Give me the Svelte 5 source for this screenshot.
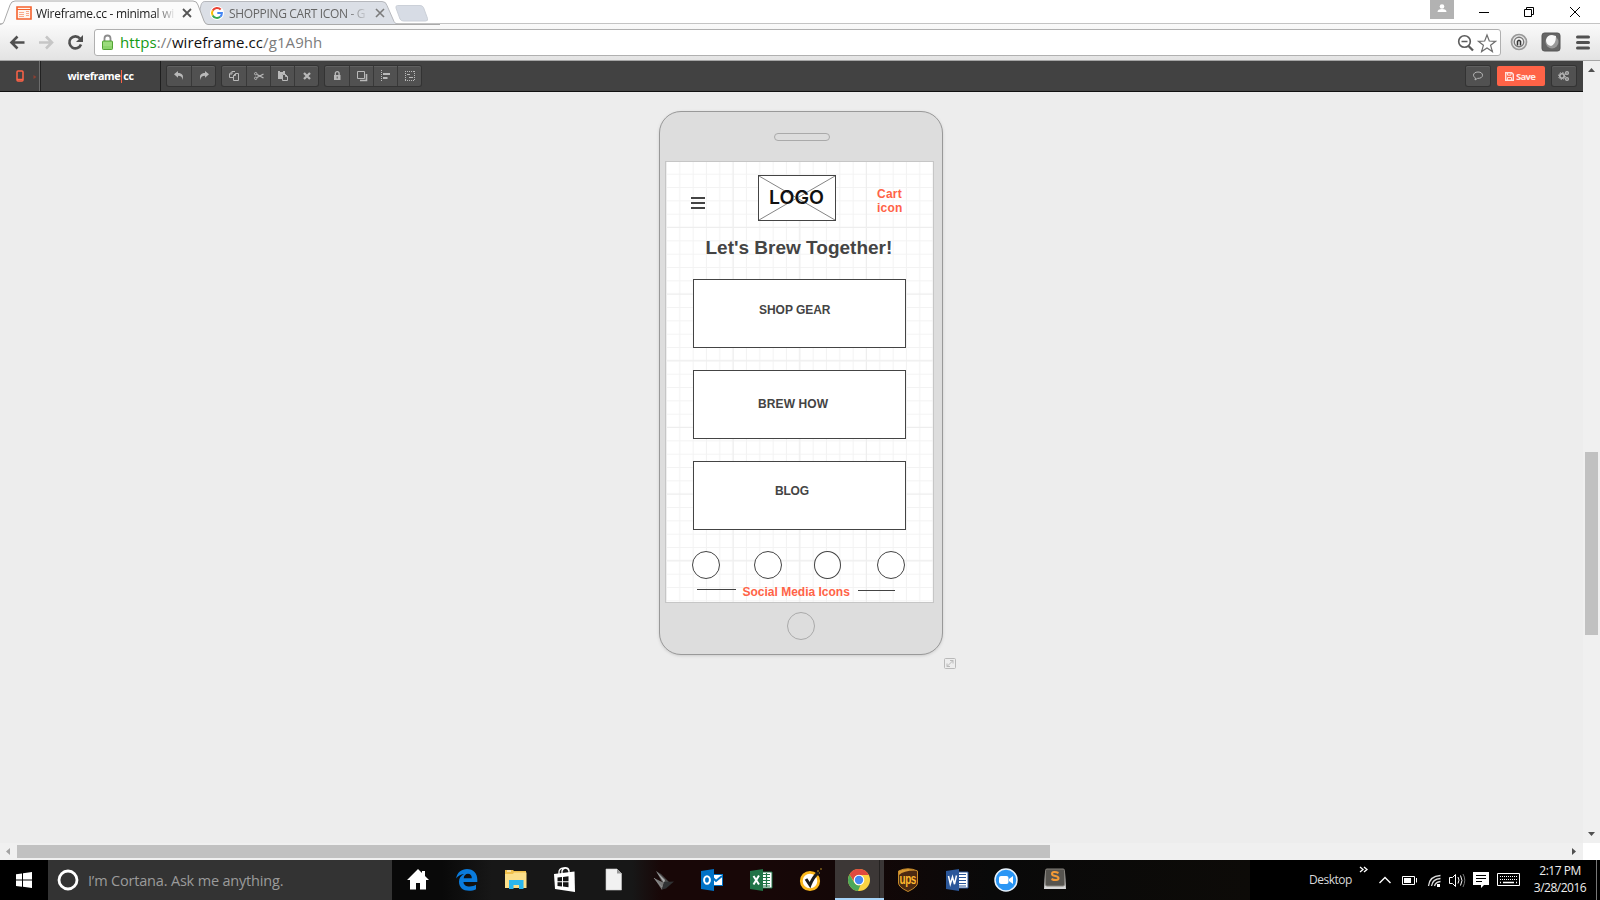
<script>
  const groups = [
    ['undo', 'redo'],
    ['copy', 'cut', 'paste', 'delete'],
    ['lock', 'layers', 'align', 'select']
  ];
  const apps = ['home', 'edge', 'files', 'store', 'page', 'snip', 'outlook', 'excel', 'norton', 'chrome', 'ups', 'word', 'zoom', 'sublime'];
  const boxes = [
    { top: 117, label: 'SHOP GEAR', x: 66, y: 23, w: 72.5 },
    { top: 208, label: 'BREW HOW', x: 65, y: 26, w: 71 },
    { top: 299, label: 'BLOG', x: 82, y: 22, w: 35 }
  ];
  const circles = [
    { x: 26, w: 28 },
    { x: 88, w: 28 },
    { x: 148, w: 27 },
    { x: 211, w: 28 }
  ];
</script>

{#snippet tool(name)}
  <svg width="12" height="12" viewBox="0 0 12 12" fill="none" stroke="#b9b9b9">
    {#if name === 'undo'}
      <path d="M1 4.3 5 1v2c4 0 6 2 4.5 7C9.300 7 8 5.800 5 5.800v2z" fill="#b9b9b9" stroke="none" />
    {:else if name === 'redo'}
      <path d="M11 4.300 7 1v2c-4 0-6 2-4.500 7C2.700 7 4 5.800 7 5.800v2z" fill="#b9b9b9" stroke="none" />
    {:else if name === 'copy'}
      <path d="M5 7.500H1.500V4L4 1.500h3M4 1.500V4H1.500M5.500 10.500v-5L7.500 3.500h3v7zM7.500 3.500v2h-2" />
    {:else if name === 'cut'}
      <circle cx="2.700" cy="3.700" r="1.200" /><circle cx="2.700" cy="8.300" r="1.200" />
      <path d="m4 4.500 6.500 3.500M4 7.500l6.500-3.500" stroke-width="1.400" />
    {:else if name === 'paste'}
      <path d="M1 1h7v3H5v5H1z" fill="#b9b9b9" stroke="none" /><path d="M5.500 4.500h3l2 2v4h-5zM8.500 4.500v2h2" /><path d="M3 1.500h3" stroke="#505050" />
    {:else if name === 'delete'}
      <path d="m3 3 6 6M9 3 3 9" stroke-width="2.300" />
    {:else if name === 'lock'}
      <path d="M3 5h6.500v5H3z" fill="#b9b9b9" stroke="none" /><path d="M4.300 5V3.500a1.900 1.900 0 0 1 3.800 0V5" stroke-width="1.300" /><path d="M6.200 6.500v2" stroke="#555" />
    {:else if name === 'layers'}
      <path d="M1.500 1.500h7v7h-7z" /><path d="M10.500 4v6.500H4" stroke-width="1.600" />
    {:else if name === 'align'}
      <path d="M1.500 0v11" stroke-dasharray="1 1" /><path d="M3 4h7M3 8h4.500" stroke-width="2" />
    {:else if name === 'select'}
      <path d="M1 1.500h10M1 10.500h10M1.500 1v10M10.500 1v10" stroke-dasharray="1 1" /><path d="M3 4.500h3M5 7.500h4" stroke-width="1.200" />
    {/if}
  </svg>
{/snippet}

{#snippet appIcon(name)}
  <svg width="28" height="28" viewBox="0 0 28 28">
    {#if name === 'home'}
      <path d="M14 3 3 14h3v9.500h6V17h4v6.500h6V14h3l-4-4V5h-3v2z" fill="#fff" />
    {:else if name === 'edge'}
      <path d="M3.200 12.500C4 6.500 8.500 3 14 3c6.500 0 10.300 4.500 10.300 10.500V16H10.500c.2 3.300 2.800 4.500 6.200 4.500 2.500 0 4.500-.6 6.300-1.700v4.500c-2 1-4.300 1.500-7 1.500-6 0-10-3.300-10-9 0-3.500 1.700-6.200 5-7.800-3.500.2-6 2-7.800 4.500m7.500-.2h8.100c0-3-1.400-4.500-3.800-4.500-2.300 0-4 1.700-4.300 4.500" fill="#0a7bdc" />
    {:else if name === 'files'}
      <path d="M3 5V4h8l1 1h12v17H3z" fill="#f0c14e" /><path d="M3 8h8l1-1.500h12.500V22H3z" fill="#fbdf8b" /><path d="M7 23V14h14.500v9H17v-4h-5.500v4z" fill="#29b6ee" /><path d="M5 5h4" stroke="#fff" />
    {:else if name === 'store'}
      <path d="m3 8 20.500-2.500L24 26 4 23z" fill="#fff" /><path d="M8 9V6c0-4.500 9-6 10-1.500V8M11 8V5c1-4 6-4 7 0" fill="none" stroke="#fff" stroke-width="1.300" /><path d="m6.500 11.500 4.500-.5v4.300H6.500zm5.500-.6 5.500-.7v5.100H12zM6.500 16.300H11v4.200l-4.500-.5zm5.500 0h5.500v5l-5.500-.7z" fill="#151515" />
    {:else if name === 'page'}
      <path d="M6 3h11l4.500 4.500V24H6z" fill="#f1f1f1" stroke="#ccc" stroke-width=".6" /><path d="M17 3v4.500h4.500z" fill="#999" />
    {:else if name === 'snip'}
      <path d="m7 5 5 3 9 9-7 1z" fill="#4a4a4a" /><path d="m7 5 9 9-1 3z" fill="#aaa" /><path d="m5 12 10 5-2 7z" fill="#777" /><path d="m15 16 10-.5-8 7-4 1z" fill="#303234" /><path d="m5 12 8 9" stroke="#999" stroke-width=".7" />
    {:else if name === 'outlook'}
      <path d="M13 8h12v12H13z" fill="#0072c6" /><path d="M14 9h10v10H14z" fill="#fff" /><path d="m14 11 4 4 6-5" fill="none" stroke="#0072c6" stroke-width="2" /><path d="m3 5 13-2v22L3 23z" fill="#0072c6" /><ellipse cx="9" cy="14" rx="2.900" ry="3.800" fill="none" stroke="#fff" stroke-width="2" />
    {:else if name === 'excel' || name === 'word'}
      <path d="M14 6h11v16H14z" fill="#fff" stroke={name === 'excel' ? '#217346' : '#2b579a'} />
      {#if name === 'excel'}<path d="M15 8.500h8M15 11.500h8M15 14.500h8M15 17.500h8M15 20h8M19.500 7v14" stroke="#217346" stroke-width="1.200" />
      {:else}<path d="M15 8.500h8M15 11.500h8M15 14.500h8M15 17.500h8M15 20h8" stroke="#2b579a" stroke-width="1.200" />{/if}
      <path d="m3 5 13-2v22L3 23z" fill={name === 'excel' ? '#217346' : '#2b579a'} />
      {#if name === 'excel'}<path d="m6.500 10 5.500 8.500M12 9.500 6.500 18.500" stroke="#fff" stroke-width="2" />
      {:else}<path d="m5.500 10 1.800 8L9.500 11l2 7.200L13.500 9.500" fill="none" stroke="#fff" stroke-width="1.500" />{/if}
    {:else if name === 'norton'}
      <circle cx="14" cy="15" r="8.700" fill="#fff" stroke="#fcb81c" stroke-width="2.800" /><path d="m10 13 4 6q3-8 9-13" fill="none" stroke="#1c1c1c" stroke-width="3" /><path d="M21 5h2m1-2h2M23 7h1" stroke="#b28a20" />
    {:else if name === 'chrome'}
      <circle cx="14" cy="14" r="11" fill="#fbd343" /><path d="M4.500 8.500A11 11 0 0 1 23.800 9H14a5 5 0 0 0-4.500 7z" fill="#e04a3f" /><path d="M4.500 8.500 9.500 17a5 5 0 0 0 6 2L13 25A11 11 0 0 1 4.500 8.500" fill="#4ba85a" /><circle cx="14" cy="14" r="5.300" fill="#fff" /><circle cx="14" cy="14" r="4.200" fill="#4688f1" />
    {:else if name === 'ups'}
      <path d="M4.500 5q9.500-4.500 19 0v12q0 4-9.500 8.500Q4.500 21 4.500 17z" fill="#4c2a12" stroke="#c78a2a" /><path d="M5 9q5-5 18-4.500V5Q14 1 5 5z" fill="#d99a31" /><g transform="translate(5.500 17.500) scale(.83 1.150)"><text x="0" y="0" font-family="Liberation Sans, sans-serif" font-weight="700" font-size="12" letter-spacing="-.5" fill="#ffb82d">ups</text></g>
    {:else if name === 'zoom'}
      <circle cx="14" cy="14" r="11" fill="#2a96f5" stroke="#e9f3fc" stroke-width="1.500" /><rect x="7" y="10" width="9.500" height="8" rx="2" fill="#fff" /><path d="m17 13 4-3v8l-4-3z" fill="#fff" />
    {:else}
      <path d="M4 6h20l1 17H3z" fill="#d7d7d7" /><rect x="4.500" y="3" width="19" height="17" rx="1.500" fill="#56544f" stroke="#85827c" /><path d="M17.500 7c-3-1.500-6.500-1.500-6.500.9 0 2.800 6.500 1.500 6.500 4.300 0 2.400-4 2.400-7 .8" fill="none" stroke="#f39a36" stroke-width="2" />
    {/if}
  </svg>
{/snippet}

<div class="page">
  <header class="tabs">
    <svg class="tabshape" width="440" height="25" viewBox="0 0 440 25">
      <path d="M197 24.500 201 5q1-4 5-3.500h176q4 0 5 4l7 16q1.500 3 5 3" fill="#dbdfe6" stroke="#b6b8bd" />
      <path d="M397.500 5.500H420q2.500 0 3.500 2l4 11q.7 2.500-2 2.500h-22q-2.500 0-3.500-2l-4-11q-.5-2.500 1.500-2.500" fill="#d7dce5" stroke="#cbd0d8" />
      <path d="M0 25q3 0 4-3l6-17q1.300-4 5-4h178q4 0 5 4l6 16q1.300 3.500 4 3.500V25" fill="#fbfbfb" />
      <path d="M0 24.500q3 0 4-3L10 5q1.300-4 5-4h178q4 0 5 4l6 16q1.300 3.500 4 3.500h232" fill="none" stroke="#aaa" />
    </svg>
    <div class="tab first">
      <svg width="16" height="14" viewBox="0 0 16 14"><path d="M1 1h14v12H1z" fill="#fff5ee" stroke="#f5622d" stroke-width="1.600" /><path d="M1 3.500h14" stroke="#f5622d" /><path d="M3 6.500h5M10 5.500h3M3 8.500h5M10 7.500h3M3 10.500h5M10 9.500h3" stroke="#f9a98a" /></svg>
      <span class="title">Wireframe.cc - minimal wi</span>
      <svg class="x" width="10" height="10"><path d="m1 1 8 8M9 1 1 9" stroke="#555" stroke-width="1.800" /></svg>
    </div>
    <div class="tab second">
      <svg width="14" height="14" viewBox="0 0 14 14"><circle cx="7" cy="7" r="7" fill="#fff" /><g fill="none" stroke-width="2"><path d="M10.700 3.500A5 5 0 0 0 2.700 4.500" stroke="#ea4335" /><path d="M2.700 4.500a5 5 0 0 0 0 5" stroke="#fbbc05" /><path d="M2.700 9.500a5 5 0 0 0 7.500 1.300" stroke="#34a853" /><path d="M10.200 10.800A5 5 0 0 0 11.900 7H7.300" stroke="#4285f4" /></g></svg>
      <span class="title grey">SHOPPING CART ICON - G</span>
      <svg class="x" width="10" height="10"><path d="m1 1 8 8M9 1 1 9" stroke="#7b7b7b" stroke-width="1.600" /></svg>
    </div>
    <div class="window">
      <span class="user"><svg width="10" height="10"><circle cx="5" cy="2.500" r="2.300" fill="#fff" /><path d="M.5 8q0-3 4.500-3t4.500 3z" fill="#fff" /></svg></span>
      <svg width="110" height="24" viewBox="0 0 110 24" fill="none" stroke="#000"><path d="M4 12.500h10M49.500 9.500h7v7h-7zM51.500 9V7.500h7v7H57M95 7l10 10M105 7 95 17" /></svg>
    </div>
  </header>

  <div class="nav">
    <svg class="navicons" width="86" height="36" viewBox="0 0 86 36" fill="none">
      <path d="M24.500 18.500H12m5.500-6-6 6 6 6" stroke="#505050" stroke-width="2.600" />
      <path d="M39 18.500h12.500m-5.500-6 6 6-6 6" stroke="#c6c6c6" stroke-width="2.600" />
      <path d="M80 14.500a6 6 0 1 0 1 6" stroke="#505050" stroke-width="2.600" /><path d="M83 11v7h-7z" fill="#505050" />
    </svg>
    <div class="omni">
      <svg width="13" height="17" viewBox="0 0 13 17"><path d="M3.500 8V4.500a3 3 0 0 1 6 0V8" fill="none" stroke="#8c8c8c" stroke-width="1.800" /><rect x="1.500" y="7" width="10" height="8.500" rx=".8" fill="#8bd46b" stroke="#52a335" /><path d="M2 9h9M2 11h9" stroke="#a9e38d" /></svg>
      <span class="url"><b>https</b><i>://</i>wireframe.cc<i>/g1A9hh</i></span>
      <svg class="right" width="42" height="24" viewBox="0 0 42 24" fill="none"><circle cx="9.500" cy="10.500" r="5.800" stroke="#5b5b5b" stroke-width="1.600" /><path d="M6.500 10.500h6" stroke="#5b5b5b" stroke-width="1.500" /><path d="m13.500 15 4.500 4.500" stroke="#5b5b5b" stroke-width="2.300" /><path d="m32 4 2.300 6 6.300.3-5 4 1.800 6.200-5.400-3.600-5.400 3.600 1.800-6.200-5-4 6.300-.3z" stroke="#6d6d6d" stroke-width="1.200" /></svg>
    </div>
    <svg class="ext" width="86" height="24" viewBox="0 0 86 24" fill="none">
      <circle cx="9" cy="12" r="7.500" fill="#e4e4e4" stroke="#999" stroke-width="1.700" /><circle cx="9" cy="12" r="4.700" fill="#f5f5f5" stroke="#777" stroke-width="1.400" /><path d="M7.500 15.500v-4q1.500-2.500 3 0v4" stroke="#333" stroke-width="1.600" />
      <rect x="32" y="3" width="18" height="18" rx="2.500" fill="#666" stroke="#555" /><circle cx="42" cy="12" r="6.500" fill="#999" /><path d="M36 10q1-5 6-5l4 1q0 8-5 10-5-1-5-6z" fill="#f8f8f8" />
      <path d="M67.500 7h11M67.500 12.500h11M67.500 18h11" stroke="#515151" stroke-width="3" stroke-linecap="round" />
    </svg>
  </div>

  <div class="main">
    <div class="work">
      <div class="appbar">
        <div class="device"><svg width="24" height="12" viewBox="0 0 24 12"><rect x="1" y="1" width="6" height="10" rx="1" fill="none" stroke="#ff6347" stroke-width="1.500" /><path d="M1 9.500h6" stroke="#ff6347" stroke-width="1.500" /><path d="m17.500 5 3 2-3 2z" fill="#8b4033" /></svg></div>
        <div class="brand"><span>wireframe</span><em></em><span>cc</span></div>
        {#each groups as group}
          <div class="group">{#each group as name}<span class="btn">{@render tool(name)}</span>{/each}</div>
        {/each}
        <span class="btn solo comment"><svg width="12" height="12" viewBox="0 0 12 12"><path d="M6 2C3 2 1.500 3.500 1.500 5.200c0 1.200.8 2.200 2 2.700L3 10l2.500-1.600C9 8.500 10.500 7 10.500 5.200S9 2 6 2z" fill="none" stroke="#b5b5b5" /></svg></span>
        <span class="save"><svg width="9" height="9" viewBox="0 0 9 9" fill="none" stroke="#ffe3de"><path d="M.7.700h6l1.600 1.600v6H.700z" stroke-width="1.400" /><path d="M2.500 1v2.200h3.500V1M2.500 8V5.500h4V8" /></svg><span>Save</span></span>
        <span class="btn solo"><svg width="12" height="12" viewBox="0 0 12 12" fill="none" stroke="#b9b9b9"><circle cx="4" cy="6" r="2.200" stroke-width="1.600" /><circle cx="4" cy="6" r="3.600" stroke-dasharray="1.300 1.500" /><circle cx="9" cy="3" r="1.400" stroke-width="1.300" /><circle cx="9" cy="9" r="1.400" stroke-width="1.300" /></svg></span>
      </div>
      <div class="canvas">
        <div class="phone">
          <div class="speaker"></div>
          <div class="screen">
            <svg class="lines" width="267" height="440">
              <defs>
                <pattern id="minor" x="1" y="-.67" width="13.333" height="13.333" patternUnits="userSpaceOnUse"><path d="M13.300 0v13.300H0" transform="translate(-.5 -.5)" fill="none" stroke="#f3f3f3" /></pattern>
                <pattern id="major" x="1" y="-.67" width="66.667" height="66.667" patternUnits="userSpaceOnUse"><path d="M66.500 0v66.500H0" transform="translate(-.5 -.5)" fill="none" stroke="#ededed" /></pattern>
              </defs>
              <rect width="267" height="440" fill="url(#minor)" /><rect width="267" height="440" fill="url(#major)" />
            </svg>
            <div class="burger"><s></s><s></s><s></s></div>
            <div class="logo"><svg width="76" height="44"><path d="m0 0 76 44M76 0 0 44" stroke="#777" stroke-width=".9" /></svg><svg class="word" width="57" height="24"><text x="0" y="17.500" textLength="55" lengthAdjust="spacingAndGlyphs">LOGO</text></svg></div>
            <div class="cart">Cart<br />icon</div>
            <div class="headline">Let's Brew Together!</div>
            {#each boxes as b}
              <div class="box" style="top:{b.top}px"><svg width={b.w} height="16" style="margin:{b.y - 1}px 0 0 {b.x - .5}px"><text x="0" y="11.500" textLength={b.w - 1}>{b.label}</text></svg></div>
            {/each}
            {#each circles as c}<div class="circle" style="left:{c.x}px;width:{c.w}px"></div>{/each}
            <div class="rule" style="left:31px;top:427px;width:39px"></div>
            <div class="social">Social Media Icons</div>
            <div class="rule" style="left:192px;top:428px;width:37px"></div>
          </div>
          <div class="home"></div>
        </div>
        <svg class="resize" width="12" height="12" viewBox="0 0 12 12" fill="none" stroke="#b9b9b9"><rect x=".5" y=".5" width="11" height="10" rx="1" /><path d="m3 8.500 6-6M6 2.500h3v3M3 5.500v3h3" /></svg>
      </div>
      <div class="hbar"><svg width="17" height="17"><path d="m10 5-4 3.500 4 3.500z" fill="#a3a3a3" /></svg><span></span><svg width="17" height="17"><path d="m6 5 4 3.500L6 12z" fill="#505050" /></svg></div>
    </div>
    <div class="vbar"><svg width="17" height="17"><path d="m5 11 3.500-4 3.500 4z" fill="#505050" /></svg><span></span><svg width="17" height="17"><path d="m5 6 3.500 4L12 6z" fill="#505050" /></svg></div>
  </div>

  <footer>
    <div class="start"><svg width="16" height="16"><path d="m0 2.200 6-.8v6.100H0zM7 1.200 16 0v7.500H7zM0 8.500h6v6.200l-6-.8zM7 8.500h9V16l-9-1.200z" fill="#fff" /></svg></div>
    <div class="search"><svg width="22" height="22"><circle cx="11" cy="11" r="9" fill="none" stroke="#fff" stroke-width="2.800" /></svg><span>I’m Cortana. Ask me anything.</span></div>
    <div class="apps">{#each apps as name}<div class="app" class:on={name === 'chrome'}>{@render appIcon(name)}</div>{/each}</div>
    <div class="tray">
      <span class="desk">Desktop</span>
      <svg width="163" height="40" viewBox="1358 860 163 40" fill="none" stroke="#fff">
        <path d="m1360 867 3 2.500-3 2.500m4-5 3 2.500-3 2.500" stroke-width="1.300" />
        <path d="m1379.500 883 5.500-5.500 5.500 5.500" stroke-width="1.400" />
        <path d="M1402.500 876.500h12v8h-12zM1416.500 878v4.500" /><path d="M1404 878h7v5h-7z" fill="#fff" stroke="none" />
        <path d="M1428.500 886q1-10 12-10.500M1431.500 886q1-7 9-7.500M1434.500 886q1-4 6-4.500" stroke="#ddd" stroke-width="1.300" /><path d="M1437 884h3v3h-3z" fill="#fff" stroke="none" />
        <path d="M1449.500 877.500h3l3-3v12l-3-3h-3zM1458 877q2 3 0 6.500M1460.500 875.500q3 5 0 10" /><path d="M1463 874q3.500 6 0 13" stroke="#777" />
        <path d="M1473 872h16v13h-5l-3 3v-3h-8z" fill="#fff" stroke="none" /><path d="M1476 875.500h10M1476 878.500h10M1476 881.500h6" stroke="#000" />
        <path d="M1497.500 873.500h22v12h-22z" /><path d="M1500 876.500h18M1500 879.500h18" stroke-dasharray="1 1" /><path d="M1500 882.500h1m2 0h11m2 0h1" stroke-width="1.300" />
      </svg>
      <div class="clock"><span>2:17 PM</span><span>3/28/2016</span></div>
      <i class="edge"></i>
    </div>
  </footer>
</div>

<style>
  :global(body) { margin: 0; background: #fff; }
  .page { width: 1600px; height: 900px; display: flex; flex-direction: column; overflow: hidden; font-family: "Open Sans", "Noto Sans", sans-serif; }
  svg { display: block; flex: none; }
  .tabs { position: relative; height: 24px; display: flex; box-shadow: inset 0 -1px #c4c4c4; flex: none; }
  .tabshape { position: absolute; left: 0; top: 0; z-index: 0; }
  .tab { position: relative; z-index: 1; display: flex; align-items: center; height: 24px; box-sizing: border-box; padding-top: 2px; }
  .first { width: 195px; padding-left: 16px; }
  .second { width: 205px; padding-left: 15px; }
  .title { width: 138px; margin-left: 4px; font-size: 12px; letter-spacing: -.27px; white-space: nowrap; overflow: hidden; color: #222; mask-image: linear-gradient(90deg, #000 118px, transparent 140px); }
  .grey { color: #666; width: 138px; margin-left: 5px; letter-spacing: -.35px; }
  .x { margin-left: 8px; }
  .second .x { margin-left: 8px; }
  .window { margin-left: auto; display: flex; width: 170px; }
  .user { width: 24px; height: 19px; background: #b2b2b2; display: flex; justify-content: center; padding-top: 4px; box-sizing: border-box; margin-right: 21px; }
  .nav { height: 37px; display: flex; flex: none; background: linear-gradient(#fafafa, #e3e3e3); box-sizing: border-box; border-bottom: 1px solid #a6a6a6; }
  .omni { margin: 5px 0 0 8px; width: 1407px; height: 27px; box-sizing: border-box; background: #fff; border: 1px solid #b0b0b0; border-radius: 3px; display: flex; align-items: center; padding-left: 6px; }
  .url { font-size: 15px; margin: -2px 0 0 6px; color: #111; letter-spacing: .09px; white-space: nowrap; }
  .url b { font-weight: 400; color: #159a15; }
  .url i { font-style: normal; color: #7c7c7c; }
  .right { margin-left: auto; margin-right: 3px; }
  .ext { margin: 6px 0 0 9px; }
  .main { display: flex; height: 799px; flex: none; }
  .work { width: 1583px; display: flex; flex-direction: column; }
  .appbar { height: 31px; box-sizing: border-box; display: flex; align-items: center; background: #424242; border-bottom: 1px solid #111; flex: none; }
  .device { width: 40px; height: 30px; box-sizing: border-box; padding: 9px 0 0 16px; border-right: 1px solid #6d6d6d; }
  .brand { width: 121px; height: 30px; box-sizing: border-box; border-left: 1px solid #222; border-right: 1px solid #1e1e1e; display: flex; justify-content: center; align-items: center; color: #fff; font-weight: 700; font-size: 10.800px; letter-spacing: -.4px; padding-bottom: 2px; }
  .brand em { width: 1px; height: 13px; background: #ff6347; margin: 2px 1px 0 1px; }
  .group { display: flex; height: 20px; margin-left: 6px; border-radius: 2px; background: #515151; box-shadow: 0 0 0 1px #333, inset 0 1px #606060; }
  .group + .group { margin-left: 7px; }
  .btn { width: 24px; height: 20px; box-sizing: border-box; display: flex; align-items: center; justify-content: center; }
  .btn + .btn { border-left: 1px solid #393939; }
  .solo { border-radius: 2px; background: #515151; box-shadow: 0 0 0 1px #333, inset 0 1px #606060; }
  .comment { margin-left: auto; }
  .save { width: 48px; height: 20px; margin: 0 7px; background: #ff6347; border-radius: 2px; display: flex; align-items: center; padding-left: 8px; box-sizing: border-box; gap: 2px; color: #ffe9e5; font-size: 9.500px; font-weight: 700; letter-spacing: -.7px; }
  .solo:last-child { margin-right: 7px; }
  .canvas { height: 751px; background: #ededed; display: flex; align-items: flex-start; padding-left: 659px; box-sizing: border-box; }
  .phone { margin-top: 19px; width: 284px; height: 544px; box-sizing: border-box; border: 1px solid #999; border-radius: 22px; background: #ddd; display: flex; flex-direction: column; align-items: center; box-shadow: 0 1px 3px #ccc; }
  .speaker { margin-top: 21px; width: 56px; height: 8px; border: 1px solid #aaa; border-radius: 5px; box-sizing: border-box; margin-left: 1px; }
  .screen { position: relative; width: 269px; height: 442px; box-sizing: border-box; border: 1px solid #c6c6c6; background: #fff; margin: 20px 4px 0 0; font-family: "Liberation Sans", Arial, sans-serif; font-weight: 700; color: #444; font-size: 12px; flex: none; }
  .screen > * { position: absolute; box-sizing: border-box; }
  .lines { left: 0; top: 0; }
  .burger { left: 25px; top: 35px; width: 14px; display: grid; gap: 3px; }
  .burger s { height: 2px; background: #444; }
  .logo { left: 92px; top: 13px; width: 78px; height: 46px; border: 1px solid #444; background: #fff; }
  .word { position: absolute; left: 10.500px; top: 10px; fill: #111; font: 600 18.500px Inter, sans-serif; }
  .cart { left: 211px; top: 25px; line-height: 14px; color: #ff6347; letter-spacing: .25px; }
  .cart { left: 211.500px; }
  .headline { left: 40px; top: 73px; font-size: 19px; line-height: 26px; white-space: nowrap; }
  .box { left: 27px; width: 213px; height: 69px; border: 1px solid #444; background: #fff; }
  .box text { fill: #444; }
  .circle { top: 389px; height: 28px; border: 1px solid #444; border-radius: 50%; background: #fff; }
  .rule { height: 1px; background: #444; }
  .social { left: 77px; top: 422px; line-height: 16px; color: #ff6347; white-space: nowrap; letter-spacing: 0; }
  .home { width: 28px; height: 28px; box-sizing: border-box; border: 1px solid #aaa; border-radius: 50%; margin-top: 9px; }
  .resize { margin: 566px 0 0 1px; }
  .hbar { height: 17px; display: flex; align-items: center; background: #f0f0f0; }
  .hbar span { width: 1033px; height: 13px; background: #c1c1c1; margin-right: auto; }
  .vbar { width: 17px; height: 782px; background: #f0f0f0; display: flex; flex-direction: column; align-items: center; }
  .vbar span { margin: 374px 0 auto; height: 183px; width: 13px; background: #c1c1c1; }
  footer { height: 40px; background: #000; display: flex; flex: none; }
  .start { width: 48px; display: flex; align-items: center; justify-content: center; }
  .search { width: 344px; box-sizing: border-box; background: #333; display: flex; align-items: center; padding-left: 9px; color: #9b9b9b; font-size: 14.500px; }
  .search span { margin-left: 9px; letter-spacing: -.18px; white-space: nowrap; }
  .apps { display: flex; padding-left: 1.500px; width: 858px; box-sizing: border-box; background: linear-gradient(90deg, #090909 0 50px, #171717 100px 240px, #180707 270px 360px, #120707 480px, #090909 600px, #0d0b08); }
  .app { width: 49px; height: 40px; box-sizing: border-box; display: flex; justify-content: center; padding-top: 6px; }
  .on { background: linear-gradient(90deg, #3c3736 44px, #242120 44px 45px, #3a3636 45px); border-bottom: 2px solid #a6d3f8; }
  .tray { flex: 1; display: flex; color: #eee; }
  .desk { width: 49px; margin-left: 59px; font-size: 12px; line-height: 39px; letter-spacing: -.5px; color: #d8d8d8; }
  .clock { width: 74px; margin-left: 2px; display: flex; flex-direction: column; align-items: center; font-size: 12px; line-height: 17px; padding-top: 2px; letter-spacing: -.5px; }
  .edge { width: 1px; margin-left: -1px; background: #777; }
</style>
